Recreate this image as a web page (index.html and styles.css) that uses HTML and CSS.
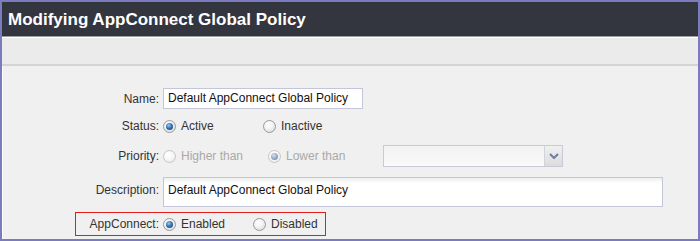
FILE: index.html
```html
<!DOCTYPE html>
<html lang="en">
<head>
    <meta charset="UTF-8">
    <title>Modifying AppConnect Global Policy</title>
    <link rel="stylesheet" href="styles.css">
</head>
<body>

<div class="frame">
    <div class="header">
        <h1>Modifying AppConnect Global Policy</h1>
    </div>
    <div class="toolbar"></div>

    <div class="content">
        <div class="row row-name">
            <label class="label">Name:</label>
            <div class="field name-field">Default AppConnect Global Policy</div>
        </div>

        <div class="row row-status">
            <span class="label">Status:</span>
            <span class="option opt-active"><span class="radio checked"></span>Active</span>
            <span class="option"><span class="radio"></span>Inactive</span>
        </div>

        <div class="row row-priority">
            <span class="label">Priority:</span>
            <span class="option disabled opt-higher"><span class="radio"></span>Higher than</span>
            <span class="option disabled opt-lower"><span class="radio checked"></span>Lower than</span>
            <div class="select">
                <span class="select-btn">
                    <svg width="10" height="6" viewBox="0 0 10 6"><path d="M1 1 L5 5 L9 1" fill="none" stroke="#6c7ca8" stroke-width="2"/></svg>
                </span>
            </div>
        </div>

        <div class="row row-desc">
            <label class="label">Description:</label>
            <div class="field desc-field">Default AppConnect Global Policy</div>
        </div>

        <div class="row row-app">
            <span class="label">AppConnect:</span>
            <span class="option opt-enabled"><span class="radio checked"></span>Enabled</span>
            <span class="option"><span class="radio"></span>Disabled</span>
        </div>
    </div>
</div>

</body>
</html>
```

FILE: styles.css
```css
html, body {
    margin: 0;
    padding: 0;
}

body {
    font-family: 'Liberation Sans', Arial, sans-serif;
    font-size: 12px;
    color: #333;
    background: #f0f0f0;
}

.frame {
    height: 241px;
    box-sizing: border-box;
    border: 2px solid #7b7bbd;
    display: flex;
    flex-direction: column;
    overflow: hidden;
}

.header {
    background: #33363f;
    height: 34px;
    border-bottom: 1px solid #9c9c9c;
    display: flex;
    align-items: center;
}

.header h1 {
    margin: 0 0 0 6px;
    font-size: 17px;
    font-weight: bold;
    color: #fff;
    padding-top: 1px;
}

.toolbar {
    height: 26px;
    background: #ebebeb;
    border-top: 1px solid #fff;
    border-bottom: 2px solid #d4d4d4;
}

.content {
    flex: 1;
    background: #f0f0f0;
    border-left: 1px solid #fff;
    padding-top: 22px;
}

.row {
    display: flex;
    align-items: center;
}

.label {
    width: 156px;
    text-align: right;
    margin-right: 4px;
    flex-shrink: 0;
}

.row-name {
    height: 21px;
}

.row-status {
    height: 20px;
    margin-top: 7px;
}

.row-priority {
    height: 22px;
    margin-top: 9px;
}

.row-desc {
    height: 30px;
    margin-top: 10px;
    align-items: flex-start;
}

.row-desc .label {
    padding-top: 6px;
}

.row-app {
    height: 22px;
    margin-top: 5px;
    margin-left: 72px;
    width: 249px;
    border: 1px solid #e31b1b;
}

.row-app .label {
    width: 83px;
}

.field {
    box-sizing: border-box;
    border: 1px solid #c3c5d8;
    background: #fff;
    color: #111;
    padding: 0 4px;
}

.name-field {
    width: 200px;
    height: 21px;
    line-height: 19px;
}

.desc-field {
    width: 500px;
    height: 30px;
    padding-top: 5px;
    background: linear-gradient(#eef0f0, #fff 6px);
}

.option {
    display: flex;
    align-items: center;
}

.opt-active {
    width: 100px;
}

.opt-higher {
    width: 105px;
}

.opt-lower {
    width: 115px;
}

.opt-enabled {
    width: 90px;
}

.option.disabled {
    color: #a9a9a9;
}

.radio {
    width: 11px;
    height: 11px;
    border-radius: 50%;
    border: 1px solid #9a9a9a;
    background: radial-gradient(circle at 40% 35%, #fff 0, #f4f4f4 40%, #d2d2d2 100%);
    margin-right: 5px;
    position: relative;
    flex-shrink: 0;
}

.radio.checked::after {
    content: "";
    position: absolute;
    left: 2px;
    top: 2px;
    width: 7px;
    height: 7px;
    border-radius: 50%;
    background: radial-gradient(circle at 40% 35%, #9cc8f0 0, #2f6eb0 50%, #173c6a 100%);
}

.disabled .radio {
    border-color: #c6c6c6;
    background: radial-gradient(circle at 40% 35%, #fff 0, #f6f6f6 50%, #e2e2e2 100%);
}

.disabled .radio.checked::after {
    background: radial-gradient(circle at 40% 35%, #d8e2ee 0, #8aa0bc 60%, #7a8ca6 100%);
}

.select {
    box-sizing: border-box;
    width: 180px;
    height: 22px;
    border: 1px solid #c8cad8;
    background: linear-gradient(#f2f2f2, #fafafa);
    display: flex;
    justify-content: flex-end;
}

.select-btn {
    width: 17px;
    border-left: 1px solid #d0d2dc;
    background: linear-gradient(#f0f0f0, #dcdcdc);
    display: flex;
    align-items: center;
    justify-content: center;
}
```
